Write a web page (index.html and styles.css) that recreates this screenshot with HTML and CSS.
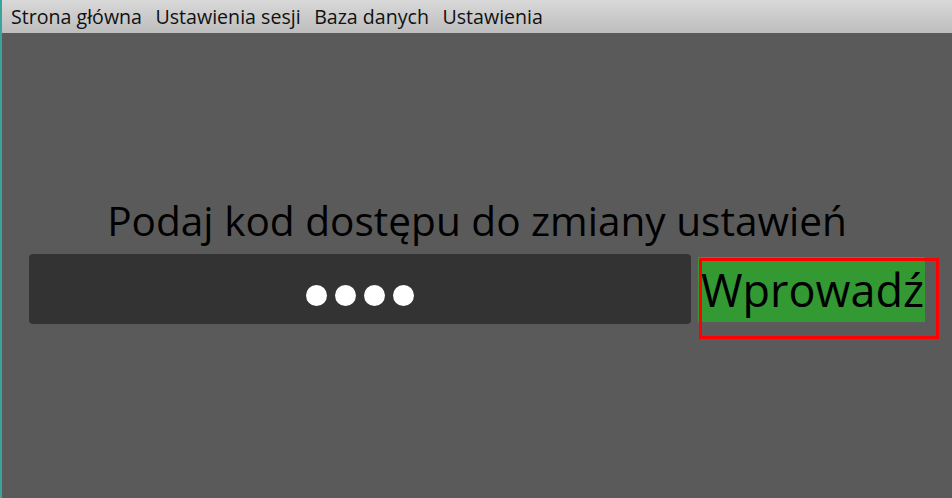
FILE: index.html
```html
<!DOCTYPE html>
<html lang="pl">
<head>
<meta charset="utf-8">
<link rel="stylesheet" href="styles.css">
</head>
<body>
<div class="window">
  <nav class="menubar">
    <span class="menu-item">Strona główna</span>
    <span class="menu-item">Ustawienia sesji</span>
    <span class="menu-item">Baza danych</span>
    <span class="menu-item">Ustawienia</span>
  </nav>
  <main class="content">
    <h1 class="title">Podaj kod dostępu do zmiany ustawień</h1>
    <div class="row">
      <div class="code-input">
        <span class="dot"></span><span class="dot"></span><span class="dot"></span><span class="dot"></span>
      </div>
      <div class="button-wrap">
        <button class="enter-btn">Wprowadź</button>
        <span class="focus-ring"></span>
      </div>
    </div>
  </main>
</div>
</body>
</html>
```
FILE: styles.css
```css
html, body {
  margin: 0;
  padding: 0;
  width: 952px;
  height: 498px;
  overflow: hidden;
  background: #5a5a5a;
  font-family: "Open Sans", "Noto Sans", sans-serif;
}
.window {
  height: 498px;
  border-left: 2px solid #3aa39c;
  box-sizing: border-box;
  display: flex;
  flex-direction: column;
}
.menubar {
  height: 33px;
  background: linear-gradient(#d9d9d9, #bdbdbd);
  display: flex;
  align-items: center;
  gap: 13.5px;
  padding-left: 9px;
  font-size: 19.6px;
  color: #111;
}
.menu-item {
  white-space: nowrap;
}
.content {
  flex: 1;
  display: flex;
  flex-direction: column;
  align-items: flex-start;
}
.title {
  margin: 163px 0 0 0;
  align-self: stretch;
  text-align: center;
  font-weight: normal;
  font-size: 40.6px;
  line-height: 50px;
  color: #000;
}
.row {
  display: flex;
  align-items: flex-start;
  margin-top: 8px;
  margin-left: 27px;
}
.code-input {
  width: 662px;
  height: 70px;
  box-sizing: border-box;
  padding-top: 13px;
  background: #333;
  border-radius: 4px;
  display: flex;
  align-items: center;
  justify-content: center;
  gap: 8px;
}
.dot {
  width: 21px;
  height: 21px;
  border-radius: 50%;
  background: #fff;
}
.button-wrap {
  position: relative;
  margin-left: 7px;
  margin-top: 3px;
  width: 240px;
  height: 81px;
}
.enter-btn {
  display: block;
  width: 227px;
  height: 65px;
  background: #339933;
  border: none;
  padding: 0 0 0 3px;
  margin: 0;
  text-align: left;
  font-family: inherit;
  font-size: 45px;
  line-height: 58px;
  color: #000;
}
.focus-ring {
  position: absolute;
  left: 1px;
  top: 1px;
  width: 240px;
  height: 81px;
  border: 3px solid #ff0000;
  box-sizing: border-box;
}
```
